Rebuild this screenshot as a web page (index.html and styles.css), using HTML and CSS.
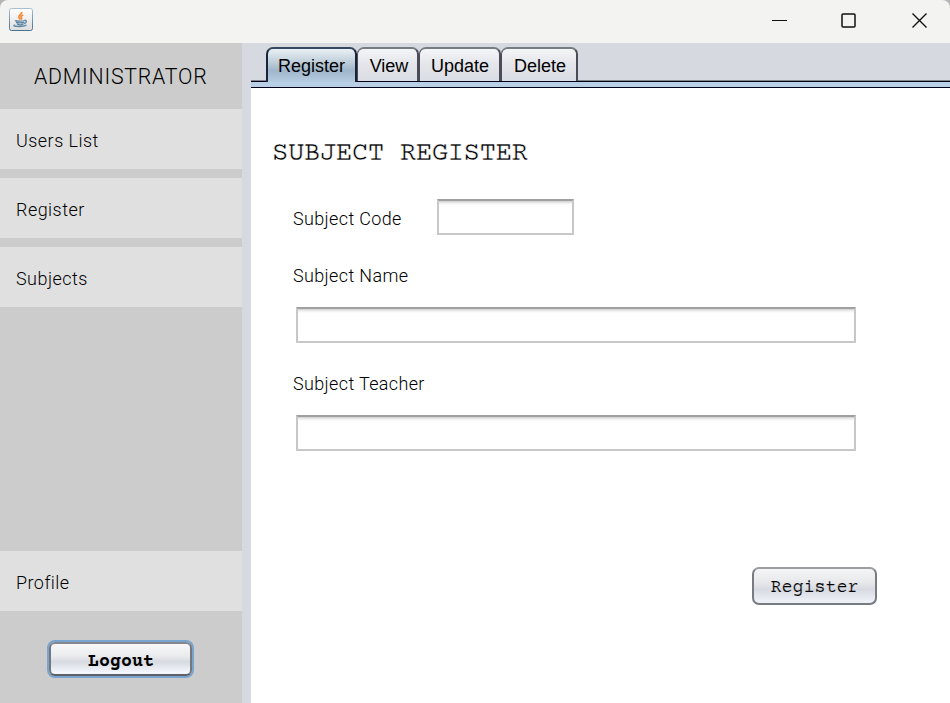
FILE: index.html
```html
<!DOCTYPE html>
<html lang="en">
<head>
<meta charset="utf-8">
<title>Administrator</title>
<link rel="stylesheet" href="styles.css">
</head>
<body>
<header class="titlebar">
  <svg class="java" width="24" height="24" viewBox="0 0 24 24">
    <defs><linearGradient id="ib" x1="0" y1="0" x2="0" y2="1"><stop offset="0" stop-color="#a9bfd0"/><stop offset="1" stop-color="#48708f"/></linearGradient>
    <linearGradient id="if" x1="0" y1="0" x2="0" y2="1"><stop offset="0" stop-color="#fff"/><stop offset="1" stop-color="#dededf"/></linearGradient></defs>
    <rect x=".5" y=".5" width="23" height="22" rx="2" fill="url(#if)" stroke="url(#ib)"/>
    <path d="M12.800 4c.5 2.400-3.500 2.900-3 5.200.2.900 1 1.500 1.300 2.300M14.300 7c-2.200.8-3 1.700-1.900 2.900.5.6.1 1.200-.4 1.600" fill="none" stroke="#f08a35" stroke-width="1.700"/>
    <path d="M6 12.600c1.500.7 8 .7 10-.1M7 14.300c1.500.7 6.500.7 8 0M8 16.200c1.500.7 5 .7 6.500 0M15.500 12.300c2.500-.5 2.700 2.200-.5 3.300M6 16.800c-4.500 1.700 7 2.500 11.500.4" fill="none" stroke="#5d86a4" stroke-width="1.300"/>
  </svg>
  <svg class="controls" width="158" height="18" viewBox="0 0 158 18" fill="none" stroke="#111">
    <path d="M0 9.500h15"/>
    <rect x="70" y="3" width="13" height="13" rx="1" stroke-width="1.500"/>
    <path d="M140.500 2.500l14 14m0-14l-14 14" stroke-width="1.400"/>
  </svg>
</header>
<div class="window">
  <aside class="sidebar">
    <div class="role"><span>ADMINISTRATOR</span></div>
    <nav class="menu">
      <a class="item"><span>Users List</span></a>
      <a class="item"><span>Register</span></a>
      <a class="item"><span>Subjects</span></a>
    </nav>
    <a class="item profile"><span>Profile</span></a>
    <button class="btn logout">Logout</button>
  </aside>
  <main class="content">
    <div class="tabs">
      <div class="tab selected">Register</div>
      <div class="tab view">View</div>
      <div class="tab update">Update</div>
      <div class="tab delete">Delete</div>
    </div>
    <div class="strip"></div>
    <form class="page">
      <h1>SUBJECT REGISTER</h1>
      <div class="row"><label class="code"><span>Subject Code</span></label><input class="field short"></div>
      <label class="name"><span>Subject Name</span></label>
      <input class="field">
      <label class="teacher"><span>Subject Teacher</span></label>
      <input class="field">
      <button class="btn submit" type="button">Register</button>
    </form>
  </main>
</div>
</body>
</html>
```
FILE: styles.css
```css
* { box-sizing: border-box; }
body { margin: 0; width: 950px; height: 703px; overflow: hidden; background: #d6d9e0; color: #000; font: 300 19px/24px Roboto, sans-serif; }
.titlebar { height: 43px; background: #f3f3f1; display: flex; justify-content: space-between; padding: 8px 20px 0 9px; border-radius: 8px 8px 0 0; box-shadow: 0 0 0 8px #b5b5b5; clip-path: inset(0); }
.controls { margin: 3px 0 0; }
.window { display: flex; height: 660px; background: #d6d9e0; }
.sidebar { width: 242px; margin-right: 9px; background: #ccc; display: flex; flex-direction: column; }
.role { height: 66px; padding: 21px 0 0 34px; font-size: 22.500px; letter-spacing: .85px; white-space: nowrap; }
.role span, .item span, label span { display: inline-block; transform: scaleX(.945); transform-origin: 0 50%; }
.menu { display: flex; flex-direction: column; gap: 9px; }
.item { display: block; height: 60px; padding: 20px 0 0 16px; background: #e0e0e0; letter-spacing: .5px; }
.profile { margin-top: 244px; }
.btn { padding: 0; color: #000; font: 18.330px/24px "Courier Prime", "Liberation Mono", monospace; border: 2px solid #777b82; border-top-color: #9b9da0; border-radius: 7px; background: linear-gradient(#f5f5f6, #e7e8eb 40%, #d7dae1 60%, #edf0f7 95%); }
.logout { width: 143px; height: 34px; margin: 31px 0 0 49px; padding: 5px 0 0 1px; font-weight: 700; border-color: #85898e #74777d #5d6066; border-radius: 6px; background: linear-gradient(#f9f9fa, #eaebee 40%, #d7dae1 60%, #f3f6fd 95%); box-shadow: 0 0 0 2px #78a4cf; }
.content { width: 699px; }
.tabs { height: 39px; padding: 4px 0 0 15px; display: flex; background: linear-gradient(#80838a, #80838a) 0 37px / 100% 1px no-repeat, linear-gradient(#000018, #000018) 0 38px / 100% 1px no-repeat; }
.tab { height: 34px; padding: 5px 0 0 2px; text-align: center; font: 18px/24px "Liberation Sans", sans-serif; border: 2px solid #4a4d58; border-top-color: #777b82; border-left-width: 1px; border-bottom: 0; border-radius: 7px 7px 0 0; background: linear-gradient(#f4f5f7, #e5e6eb 45%, #dadde4); }
.selected { width: 91px; height: 35px; padding-left: 0; background: linear-gradient(#ebf1f5, #bbcbd8 43%, #9fb6ca 65%, #b4cbe1); border: 2px solid #182238; border-top-color: #34485d; border-bottom: 0; }
.view { width: 62px; padding-left: 3px; }
.update { width: 82px; padding-left: 1px; }
.delete { width: 77px; }
.strip { height: 6px; background: #b8cfe5; border-bottom: 1px solid #000018; }
.page { height: 615px; background: #fff; display: flex; flex-direction: column; align-items: flex-start; }
h1 { margin: 51px 0 0 21px; font: 400 27.600px/30px "Courier Prime", "Liberation Mono", monospace; letter-spacing: -.58px; white-space: pre; -webkit-text-stroke: .45px #fff; }
.row { display: flex; margin: 30px 0 0 42px; height: 36px; }
label { height: 24px; letter-spacing: .4px; white-space: nowrap; }
.code { width: 144px; margin-top: 8px; }
.name, .teacher { margin-left: 42px; }
.name { margin-top: 29px; }
.teacher { margin-top: 29px; }
.field { width: 560px; height: 36px; margin: 0; padding: 0 8px; border: 2px solid #c8c8c8; border-top: 2px solid #a0a0a0; background: linear-gradient(#cfcfcf, #efefef 2px, #fff 4px); outline: 0; }
.page > .field { margin: 19px 0 0 45px; }
.short { width: 137px; margin-left: 0; }
.submit { width: 125px; height: 38px; margin: 116px 0 0 501px; padding-top: 3px; -webkit-text-stroke: .15px #e4e6eb; }
```
